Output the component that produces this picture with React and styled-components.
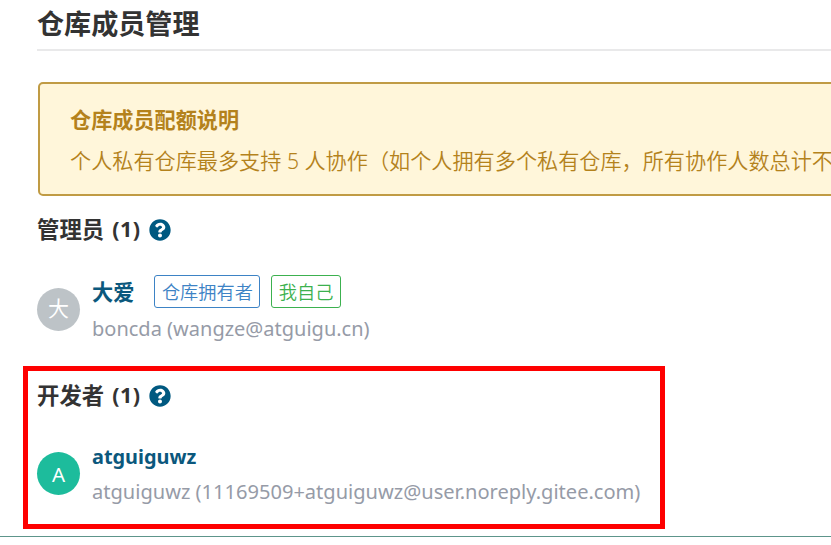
import React from 'react';
import styled, { createGlobalStyle } from 'styled-components';
import { FaQuestionCircle } from 'react-icons/fa';

const GlobalStyle = createGlobalStyle`
  * { box-sizing: border-box; }
  html, body { margin: 0; background: #fff; overflow: hidden; }
  body { font-family: "Noto Sans", "Noto Sans CJK SC", sans-serif; }
`;

const Page = styled.main`
  width: 831px;
  height: 545px;
  padding-left: 37px;
  overflow: hidden;
  white-space: nowrap;
`;

const Title = styled.h1`
  margin: 0;
  height: 51px;
  border-bottom: 2px solid #e9e9ea;
  color: #333;
  font-size: 27.1px;
  font-weight: 700;
  line-height: 48px;
`;

const Notice = styled.section`
  width: 900px;
  height: 114px;
  margin: 31px 0 0 1px;
  padding: 18px 0 0 30px;
  border: 2px solid #c09b44;
  border-radius: 5px;
  background: #fff6da;
  color: #b4821c;
`;

const NoticeTitle = styled.h2`
  margin: 0;
  font-size: 21.15px;
  line-height: 35px;
`;

const NoticeText = styled.p`
  margin: 4px 0 0;
  font-size: 21.15px;
  line-height: 40px;
  font-weight: 350;
`;

const Group = styled.section`
  position: relative;
  height: ${(p) => p.$height}px;
  padding-top: ${(p) => p.$top}px;
`;

const GroupHeading = styled.h2`
  display: flex;
  align-items: center;
  height: 38px;
  margin: 0;
  color: #333;
  font-size: 22.4px;
  line-height: 38px;

  svg { margin-left: 8px; color: #005980; }
`;

const Count = styled.span`
  margin-left: 8px;
  font-size: 21.5px;
  line-height: 36px;
  padding-bottom: 2px;
  letter-spacing: 0.5px;
`;

const Member = styled.div`
  display: flex;
  gap: 12px;
  padding-top: ${(p) => p.$top}px;
`;

const Avatar = styled.div`
  width: 43px;
  height: 43px;
  margin-top: ${(p) => p.$top}px;
  border-radius: 50%;
  background: ${(p) => p.$color};
  color: #fff;
  font-size: ${(p) => p.$size}px;
  font-weight: 400;
  line-height: ${(p) => p.$line}px;
  text-align: center;
`;

const Details = styled.div`
  display: flex;
  flex-direction: column;
`;

const NameRow = styled.div`
  display: flex;
  align-items: center;
  height: ${(p) => p.$height}px;
`;

const Name = styled.strong`
  margin-right: 20px;
  color: #0b587d;
  font-size: ${(p) => p.$size}px;
  line-height: 32px;
`;

const Tag = styled.span`
  height: 33px;
  margin-right: 11px;
  padding: 0 6.5px;
  border: 1px solid ${(p) => p.$color};
  border-radius: 3px;
  color: ${(p) => p.$color};
  font-size: 18.2px;
  font-weight: 350;
  line-height: 32px;
`;

const Account = styled.div`
  margin-top: ${(p) => p.$top}px;
  color: #969ba7;
  font-size: ${(p) => p.$size}px;
  line-height: 32px;
`;

const Highlight = styled.div`
  position: absolute;
  top: 0;
  left: -14px;
  width: 642px;
  height: 163px;
  border: 5px solid #fe0000;
`;

const Divider = styled.div`
  height: 1px;
  margin: 7px 0 0 -37px;
  background: #5d958b;
`;

export default function App() {
  return (
    <>
      <GlobalStyle />
      <Page>
        <Title>仓库成员管理</Title>
        <Notice>
          <NoticeTitle>仓库成员配额说明</NoticeTitle>
          <NoticeText>个人私有仓库最多支持 5 人协作（如个人拥有多个私有仓库，所有协作人数总计不</NoticeText>
        </Notice>
        <Group $height={170} $top={15}>
          <GroupHeading>管理员<Count>(1)</Count><FaQuestionCircle size={22} /></GroupHeading>
          <Member $top={24}>
            <Avatar $color="#bdc3c7" $top={15} $size={21} $line={41}>大</Avatar>
            <Details>
              <NameRow $height={37}>
                <Name $size={21.2}>大爱</Name>
                <Tag $color="#3d83c5">仓库拥有者</Tag>
                <Tag $color="#3cb14f">我自己</Tag>
              </NameRow>
              <Account $top={3} $size={20}>boncda (wangze@atguigu.cn)</Account>
            </Details>
          </Member>
        </Group>
        <Group $height={163} $top={11}>
          <GroupHeading>开发者<Count>(1)</Count><FaQuestionCircle size={22} /></GroupHeading>
          <Member $top={25}>
            <Avatar $color="#1dbc9c" $top={12} $size={20.5} $line={44}>A</Avatar>
            <Details>
              <NameRow $height={34}>
                <Name $size={19.9}>atguiguwz</Name>
              </NameRow>
              <Account $top={2} $size={20.07}>atguiguwz (11169509+atguiguwz@user.noreply.gitee.com)</Account>
            </Details>
          </Member>
          <Highlight />
        </Group>
        <Divider />
      </Page>
    </>
  );
}
